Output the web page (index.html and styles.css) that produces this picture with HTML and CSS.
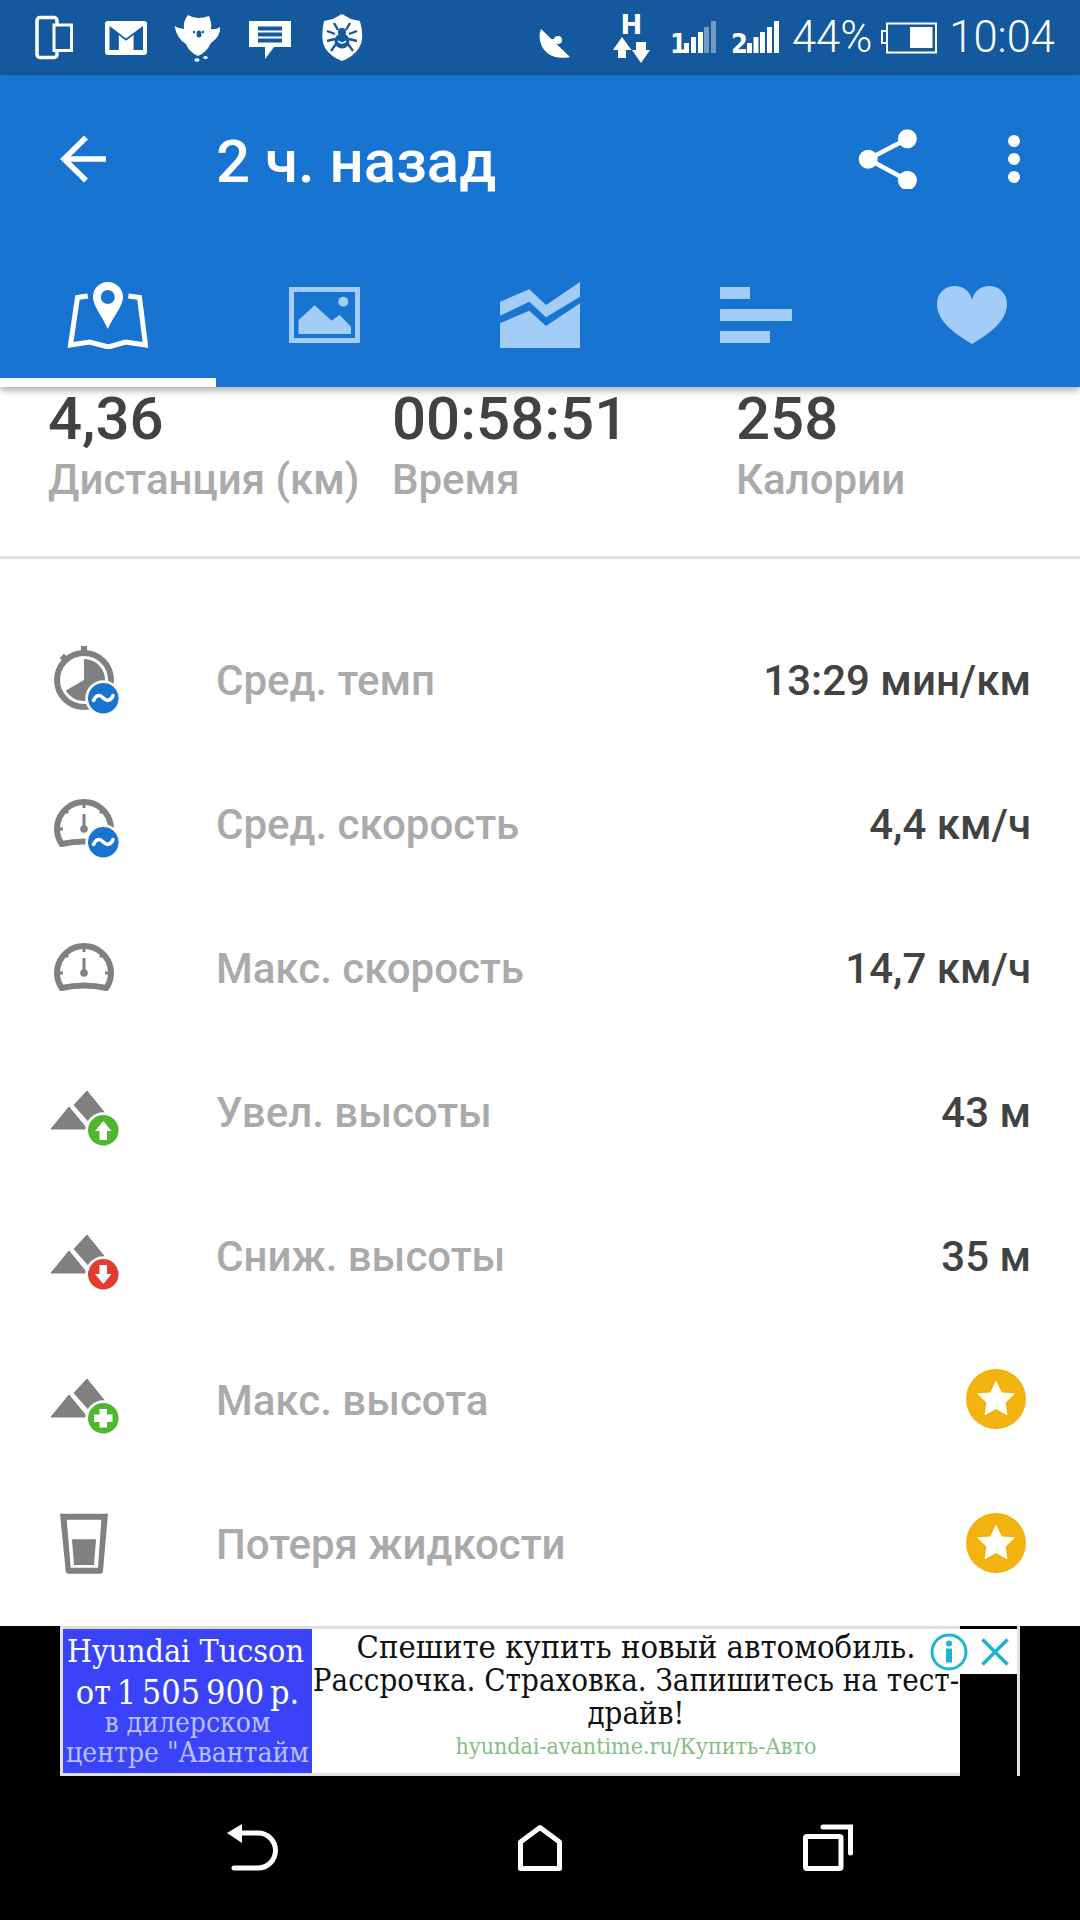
FILE: index.html
```html
<!DOCTYPE html>
<html>
<head>
  <title>2 ч. назад</title>
  <link rel="stylesheet" href="styles.css">
</head>
<body>
  <div class="status-bar">
    <svg class="st st-phone" viewBox="35 0 38 75"><rect x="37" y="17.5" width="20" height="40" rx="3" fill="none" stroke="#fff" stroke-width="3.5"/><rect x="54" y="25" width="17.5" height="25.5" fill="#14589e" stroke="#fff" stroke-width="3"/></svg>
    <svg class="st st-gmail" viewBox="105 0 42 75"><rect x="105" y="21" width="42" height="34" rx="3" fill="#fff"/><path d="M109.500 26L126 38.500L143 26V50H133.600V35L126 40.700L118.800 35V50H109.500Z" fill="#14589e"/></svg>
    <svg class="st st-owl" viewBox="174 0 47 75"><g transform="translate(174 14)"><path d="M14 1Q19 4 24 4Q30 4 35 2Q38 9 37 15Q42 16 46 13Q47 22 37 29Q33 38 24 42Q15 38 12 30Q3 25 .5 12Q5 15 10 15Q9 7 14 1Z" fill="#fff"/><ellipse cx="25" cy="20" rx="2.5" ry="3.5" fill="#14589e"/><circle cx="20" cy="18" r="1.2" fill="#14589e"/><circle cx="29" cy="18" r="1.2" fill="#14589e"/><ellipse cx="23" cy="46" rx="2.6" ry="1.8" fill="#fff"/><ellipse cx="31.5" cy="43.5" rx="2.2" ry="1.6" fill="#fff"/></g></svg>
    <svg class="st st-msg" viewBox="249 0 42 75"><path d="M249 21h42v26h-17l-9 12v-12h-16z" fill="#fff"/><path d="M258 26.500h24v4h-24zM258 32.500h24v4h-24zM258 38.500h24v4h-24z" fill="#14589e"/></svg>
    <svg class="st st-shield" viewBox="321 0 42 75"><g transform="translate(321 14)"><path d="M21 0L30 5L39 7Q44 25 38 34Q32 43 21 47Q10 43 4 34Q-1 25 3 7L12 5Z" fill="#fff"/><g fill="none" stroke="#14589e" stroke-width="2.400"><path d="M13 9l4 7M29 9l-4 7M6 17l8 3M36 17l-8 3M6 27l8-2M36 27l-8-2M10 37l5-7M32 37l-5-7"/></g><circle cx="21" cy="27" r="7.500" fill="#14589e"/><circle cx="21" cy="18" r="4" fill="#14589e"/><path d="M17 27q4 4 8 0" fill="none" stroke="#fff" stroke-width="1.500"/></g></svg>
    <div class="status-right">
      <svg class="st st-dish" viewBox="540 0 30 75"><path d="M541 29L570 57C556 60 545 55 541 44Q538 36 541 29Z" fill="#fff"/><path d="M550 41L558 40" stroke="#fff" stroke-width="3"/><circle cx="558" cy="40" r="4" fill="#fff"/></svg>
      <svg class="st st-net" viewBox="612 0 38 75"><text x="631.500" y="33.500" class="st-h">H</text><path d="M622 37L631.500 50H626V58H618V50H613ZM632 50H636V42H646V50H650L641 63Z" fill="#fff"/></svg>
      <svg class="st st-sim1" viewBox="672 0 44 75"><text x="670" y="53" class="st-n">1</text><path d="M684 43h5v10h-5zM691 37h5v16h-5zM698 32h5v21h-5z" fill="#fff"/><path d="M704 27h5v26h-5zM711 21h5v32h-5z" fill="#fff" opacity=".4"/></svg>
      <svg class="st st-sim2" viewBox="732 0 47 75"><text x="731" y="53" class="st-n">2</text><path d="M747 43h5v10h-5zM753.500 37h5v16h-5zM760 32h5v21h-5zM767 27h5v26h-5zM774 21h5v32h-5z" fill="#fff"/></svg>
      <span class="st-text st-pct">44%</span>
      <svg class="st st-batt" viewBox="881 0 57 75"><path d="M887.500 31H883V43H887.500" fill="none" stroke="#fff" stroke-width="2"/><rect x="888" y="23.500" width="49" height="29" fill="none" stroke="#fff" stroke-width="2"/><rect x="911" y="27" width="22.500" height="21" fill="#fff"/></svg>
      <span class="st-text st-time">10:04</span>
    </div>
  </div>

  <div class="app-bar">
    <div class="toolbar">
      <svg class="tb-back" viewBox="0 0 48 48"><path d="M46 24H4M26 2.500L4 24l22 21.500" fill="none" stroke="#fff" stroke-width="5.500"/></svg>
      <div class="tb-title">2 ч. назад</div>
      <svg class="tb-share" viewBox="858 128 60 60"><path d="M907.400 137.700L868.200 158.300L907.400 179.300" fill="none" stroke="#fff" stroke-width="4.500"/><circle cx="907.400" cy="137.700" r="9.500" fill="#fff"/><circle cx="868.200" cy="158.300" r="9.500" fill="#fff"/><circle cx="907.400" cy="179.300" r="9.500" fill="#fff"/></svg>
      <svg class="tb-more" viewBox="0 0 12 48"><circle cx="6" cy="6" r="6" fill="#fff"/><circle cx="6" cy="24" r="6" fill="#fff"/><circle cx="6" cy="42" r="6" fill="#fff"/></svg>
    </div>
    <div class="tabs">
      <div class="tab tab-active">
        <svg class="tab-icon" width="82" height="68" viewBox="67 281 82 68"><path d="M87.800 296L77.500 297.500L70.500 345L89.500 342L108.500 347L125.700 342L145.500 345L139.500 297.500L128.400 296" fill="none" stroke="#fff" stroke-width="5"/><path fill-rule="evenodd" d="M107.800 282C99 282 93 289 93 297C93 306 102 316 107.800 329C113.500 316 123 306 123 297C123 289 116.500 282 107.800 282ZM107.800 290A7 7 0 1 1 107.800 304A7 7 0 1 1 107.800 290Z" fill="#fff"/></svg>
      </div>
      <div class="tab">
        <svg class="tab-icon" width="71" height="56" viewBox="288 287 71 56"><rect x="290.500" y="289.500" width="66" height="51" fill="none" stroke="#a3cdf7" stroke-width="5"/><path d="M297.500 320L313.700 305.300L330.600 320.700L338.500 314.700L350 326.700V334H297.500Z" fill="#a3cdf7"/><circle cx="342.300" cy="301.700" r="5" fill="#a3cdf7"/></svg>
      </div>
      <div class="tab">
        <svg class="tab-icon" width="80" height="66" viewBox="500 282 80 66"><path d="M500 301.700L529.300 289.300L546 305L580 282V296.700L546 317.300L529.300 301.700L500 315.700ZM500 323.300L529.300 310.700L546 326L580 303.300V348H500Z" fill="#a3cdf7"/></svg>
      </div>
      <div class="tab">
        <svg class="tab-icon" width="72" height="56" viewBox="0 0 72 56"><path d="M0 0h30v12H0zM0 22h72v12H0zM0 44h50v12H0z" fill="#a3cdf7"/></svg>
      </div>
      <div class="tab">
        <svg class="tab-icon" width="70" height="58" viewBox="0 0 70 58"><path d="M35 58C15 46 0 34 0 18C0 7 8 0 18 0C26 0 33 5 35 14C37 5 44 0 52 0C62 0 70 7 70 18C70 34 55 46 35 58Z" fill="#a3cdf7"/></svg>
      </div>
    </div>
  </div>

  <div class="content">
    <div class="stats">
      <div class="stat"><div class="stat-value">4,36</div><div class="stat-label">Дистанция (км)</div></div>
      <div class="stat"><div class="stat-value">00:58:51</div><div class="stat-label">Время</div></div>
      <div class="stat"><div class="stat-value">258</div><div class="stat-label">Калории</div></div>
    </div>

    <div class="rows">
      <div class="row">
        <svg class="row-icon" viewBox="0 0 70 70"><circle cx="35" cy="34" r="27" fill="none" stroke="#808080" stroke-width="6"/><rect x="32" y="0" width="6" height="8" fill="#808080"/><rect x="12" y="9" width="6" height="7" fill="#808080" transform="rotate(-45 15 12)"/><path d="M35 34V13A21 21 0 1 1 16.800 44.500Z" fill="#808080"/><circle cx="54.300" cy="52.300" r="18" fill="#fff"/><circle cx="54.300" cy="52.300" r="15.300" fill="#1775d1"/><path d="M44.500 54.500C47 48.500 51 48.500 54.300 52C57.500 55.500 61.500 55.500 64 49.500" fill="none" stroke="#fff" stroke-width="3.500" stroke-linecap="round"/></svg>
        <div class="row-label">Сред. темп</div>
        <div class="row-value">13:29 мин/км</div>
      </div>
      <div class="row">
        <svg class="row-icon" viewBox="0 0 70 70"><path d="M12.600 54A27 27 0 1 1 57.400 54Q35 49 12.600 54Z" fill="none" stroke="#808080" stroke-width="6" stroke-linejoin="round"/><path d="M35 12v6M19 23l-4-4M51 23l4-4M8 39h6M56 39h6M35 24v15" stroke="#808080" stroke-width="3" fill="none"/><circle cx="35" cy="39" r="3.800" fill="#808080"/><circle cx="54.300" cy="52.300" r="18" fill="#fff"/><circle cx="54.300" cy="52.300" r="15.300" fill="#1775d1"/><path d="M44.500 54.500C47 48.500 51 48.500 54.300 52C57.500 55.500 61.500 55.500 64 49.500" fill="none" stroke="#fff" stroke-width="3.500" stroke-linecap="round"/></svg>
        <div class="row-label">Сред. скорость</div>
        <div class="row-value">4,4 км/ч</div>
      </div>
      <div class="row">
        <svg class="row-icon" viewBox="0 0 70 70"><path d="M12.600 54A27 27 0 1 1 57.400 54Q35 49 12.600 54Z" fill="none" stroke="#808080" stroke-width="6" stroke-linejoin="round"/><path d="M35 12v6M19 23l-4-4M51 23l4-4M8 39h6M56 39h6M35 24v15" stroke="#808080" stroke-width="3" fill="none"/><circle cx="35" cy="39" r="3.800" fill="#808080"/></svg>
        <div class="row-label">Макс. скорость</div>
        <div class="row-value">14,7 км/ч</div>
      </div>
      <div class="row">
        <svg class="row-icon" viewBox="0 0 70 70"><path d="M2 51L20 29L38 51ZM25 27L38 13L55 34L41 45Z" fill="#808080" stroke="#808080" stroke-linejoin="round"/><circle cx="54.300" cy="52.300" r="18" fill="#fff"/><circle cx="54.300" cy="52.300" r="15.300" fill="#4fb72e"/><path d="M54.300 43L62.500 53H58V62H50.500V53H46Z" fill="#fff"/></svg>
        <div class="row-label">Увел. высоты</div>
        <div class="row-value">43 м</div>
      </div>
      <div class="row">
        <svg class="row-icon" viewBox="0 0 70 70"><path d="M2 51L20 29L38 51ZM25 27L38 13L55 34L41 45Z" fill="#808080" stroke="#808080" stroke-linejoin="round"/><circle cx="54.300" cy="52.300" r="18" fill="#fff"/><circle cx="54.300" cy="52.300" r="15.300" fill="#e53a30"/><path d="M54.300 62L46 52H50.500V43H58V52H62.500Z" fill="#fff"/></svg>
        <div class="row-label">Сниж. высоты</div>
        <div class="row-value">35 м</div>
      </div>
      <div class="row">
        <svg class="row-icon" viewBox="0 0 70 70"><path d="M2 51L20 29L38 51ZM25 27L38 13L55 34L41 45Z" fill="#808080" stroke="#808080" stroke-linejoin="round"/><circle cx="54.300" cy="52.300" r="18" fill="#fff"/><circle cx="54.300" cy="52.300" r="15.300" fill="#4fb72e"/><path d="M50.500 43H58V48.500H63.500V56H58V61.500H50.500V56H45V48.500H50.500Z" fill="#fff"/></svg>
        <div class="row-label">Макс. высота</div>
        <svg class="row-star" viewBox="0 0 60 60"><circle cx="30" cy="30" r="30" fill="#f2b20f"/><path d="M30 11.500L35.800 23.500L49 24.500L39.500 33.800L41.500 46.500L30 40L18.500 46.500L20.500 33.800L11 24.500L24.200 23.500Z" fill="#fff"/></svg>
      </div>
      <div class="row">
        <svg class="row-icon" viewBox="0 0 70 70"><path fill-rule="evenodd" d="M11 3.700H59L54 61Q53.800 63.700 51 63.700H19.500Q17 63.700 16.700 61ZM17.700 9.700L21.700 57.700H49L52.300 9.700Z" fill="#808080"/><path d="M23 29.300H47L45 55H25Z" fill="#808080"/></svg>
        <div class="row-label">Потеря жидкости</div>
        <svg class="row-star" viewBox="0 0 60 60"><circle cx="30" cy="30" r="30" fill="#f2b20f"/><path d="M30 11.500L35.800 23.500L49 24.500L39.500 33.800L41.500 46.500L30 40L18.500 46.500L20.500 33.800L11 24.500L24.200 23.500Z" fill="#fff"/></svg>
      </div>
    </div>
  </div>

  <div class="ad-bar">
    <div class="ad">
      <div class="ad-side">
        <div class="ad-title">Hyundai Tucson</div>
        <div class="ad-price">от 1 505 900 р.</div>
        <div class="ad-sub">в дилерском</div>
        <div class="ad-sub">центре "Авантайм</div>
      </div>
      <div class="ad-main">
        <div class="ad-text ad-lead">Спешите купить новый автомобиль.</div>
        <div class="ad-text">Рассрочка. Страховка. Запишитесь на тест-</div>
        <div class="ad-text">драйв!</div>
        <div class="ad-url">hyundai-avantime.ru/Купить-Авто</div>
      </div>
    </div>
    <div class="ad-choices">
      <svg class="ad-info" viewBox="0 0 38 38"><circle cx="19" cy="19" r="17" fill="#fff" stroke="#1fb3d1" stroke-width="3"/><circle cx="19" cy="10.500" r="3" fill="#1fb3d1"/><rect x="16" y="15.500" width="6" height="14" fill="#1fb3d1"/></svg>
      <svg class="ad-close" viewBox="0 0 28 28"><path d="M1.500 1.500L26.500 26.500M26.500 1.500L1.500 26.500" stroke="#1fb3d1" stroke-width="3.500"/></svg>
    </div>
    <div class="ad-edge"></div>
  </div>

  <div class="nav-bar">
    <svg class="nav-icon" viewBox="0 0 60 56"><path d="M18 13H36A17.500 17.500 0 0 1 36 48H12" fill="none" stroke="#fff" stroke-width="5" stroke-linecap="round"/><path d="M5 13L20 4V23Z" fill="#fff"/></svg>
    <svg class="nav-icon" viewBox="0 0 60 56"><path d="M10.500 48.500H49.500V22L30 7.500L10.500 22Z" fill="none" stroke="#fff" stroke-width="5" stroke-linejoin="round"/></svg>
    <svg class="nav-icon" viewBox="0 0 60 56"><rect x="7.500" y="16.500" width="35.500" height="32" rx="1.500" fill="none" stroke="#fff" stroke-width="5"/><path d="M25 7H52.500V33" fill="none" stroke="#fff" stroke-width="5" stroke-linecap="round"/></svg>
  </div>
</body>
</html>
```

FILE: styles.css
```css
body {
  margin: 0;
  width: 1080px;
  height: 1920px;
  display: flex;
  flex-direction: column;
  overflow: hidden;
  background: #fff;
  font-family: Roboto, sans-serif;
}

.status-bar {
  height: 75px;
  display: flex;
  align-items: center;
  padding: 0 25px 0 35px;
  background: #14589e;
  color: #fff;
}

.st {
  display: block;
  height: 75px;
  overflow: visible;
}

.st-phone { width: 38px; }
.st-gmail { width: 42px; margin-left: 32px; }
.st-owl { width: 47px; margin-left: 27px; }
.st-msg { width: 42px; margin-left: 28px; }
.st-shield { width: 42px; margin-left: 30px; }

.status-right {
  margin-left: auto;
  display: flex;
  align-items: center;
}

.st-dish { width: 30px; }
.st-net { width: 38px; margin-left: 42px; }
.st-sim1 { width: 44px; margin-left: 22px; }
.st-sim2 { width: 47px; margin-left: 16px; }
.st-batt { width: 57px; margin-left: 8px; }

.st-h {
  font: bold 26px "DejaVu Sans", sans-serif;
  fill: #fff;
  text-anchor: middle;
}

.st-n {
  font: bold 27px "DejaVu Sans Condensed", "DejaVu Sans", sans-serif;
  fill: #fff;
}

.st-text {
  font-size: 43.5px;
  font-weight: 300;
  line-height: 75px;
}

.st-pct { margin-left: 13px; }
.st-time { margin-left: 12px; }

.app-bar {
  position: relative;
  height: 312px;
  background: #1775d1;
  box-shadow: 0 3px 8px rgba(0,0,0,0.35);
}

.toolbar {
  height: 168px;
  display: flex;
  align-items: center;
  padding-left: 60px;
  color: #fff;
}

.tb-back {
  width: 48px;
  height: 48px;
}

.tb-title {
  flex: 1;
  margin: 4px 0 0 108px;
  font-size: 60px;
  font-weight: 500;
}

.tb-share {
  width: 60px;
  height: 60px;
}

.tb-more {
  width: 12px;
  height: 48px;
  margin: 0 60px 0 90px;
}

.tabs {
  height: 144px;
  display: flex;
}

.tab {
  flex: 1;
  display: flex;
  align-items: center;
  justify-content: center;
}

.tab-active {
  box-shadow: inset 0 -9px 0 #fff;
}

.content {
  flex: 1;
  min-height: 0;
}

.stats {
  display: grid;
  grid-template-columns: 344px 344px 344px;
  height: 169px;
  padding-left: 48px;
  border-bottom: 3px solid #e0e0e0;
}

.stat-value {
  font-size: 60px;
  font-weight: 500;
  line-height: 64px;
  color: #424242;
}

.stat-label {
  margin-top: 4px;
  font-size: 42px;
  font-weight: 500;
  line-height: 50px;
  color: #aaa;
}

.rows {
  padding: 49px 49px 0;
}

.row {
  height: 144px;
  display: flex;
  align-items: center;
}

.row-icon {
  width: 70px;
  height: 70px;
  flex: none;
  margin-top: 2px;
}

.row-label {
  flex: 1;
  margin-left: 97px;
  font-size: 42px;
  font-weight: 500;
  color: #aaa;
}

.row-value {
  font-size: 42px;
  font-weight: 500;
  color: #424242;
}

.row-star {
  width: 60px;
  height: 60px;
  margin: -2px 5px 0 0;
}

.ad-bar {
  position: relative;
  height: 150px;
  display: flex;
  padding-left: 60px;
  background: #000;
}

.ad {
  width: 900px;
  height: 150px;
  box-sizing: border-box;
  display: flex;
  border: 3px solid #e0e0e0;
  border-right: 0;
  background: #fff;
  font-family: "DejaVu Serif Condensed", "DejaVu Serif", serif;
}

.ad-side {
  width: 249px;
  flex: none;
  overflow: hidden;
  background: #3a43f7;
  color: #fff;
  text-align: center;
  white-space: nowrap;
}

.ad-title {
  font-size: 32px;
  line-height: 44px;
  margin-right: 4px;
}

.ad-price {
  margin-bottom: -3px;
  font-size: 34px;
  line-height: 38px;
  word-spacing: -4px;
}

.ad-sub {
  font-size: 28px;
  line-height: 30px;
  color: #b9bff7;
}

.ad-main {
  flex: 1;
  min-width: 0;
  padding-top: 2px;
  overflow: hidden;
  text-align: center;
  white-space: nowrap;
  color: #111;
}

.ad-text {
  font-size: 31px;
  line-height: 33px;
}

.ad-lead {
  font-size: 32.5px;
}

.ad-url {
  margin-top: 1px;
  font-size: 23px;
  line-height: 30px;
  color: #85bd85;
}

.ad-choices {
  position: absolute;
  left: 960px;
  top: 3px;
  width: 57px;
  height: 45px;
  display: flex;
  align-items: center;
  background: #fff;
}

.ad-info {
  width: 38px;
  height: 38px;
  flex: none;
  margin-left: -30px;
}

.ad-close {
  width: 28px;
  height: 28px;
  flex: none;
  margin-left: 13px;
}

.ad-edge {
  width: 3px;
  margin-left: 57px;
  background: #e0e0e0;
}

.nav-bar {
  height: 144px;
  display: flex;
  justify-content: center;
  gap: 228px;
  padding-top: 44px;
  box-sizing: border-box;
  background: #000;
}

.nav-icon {
  width: 60px;
  height: 56px;
}
```
